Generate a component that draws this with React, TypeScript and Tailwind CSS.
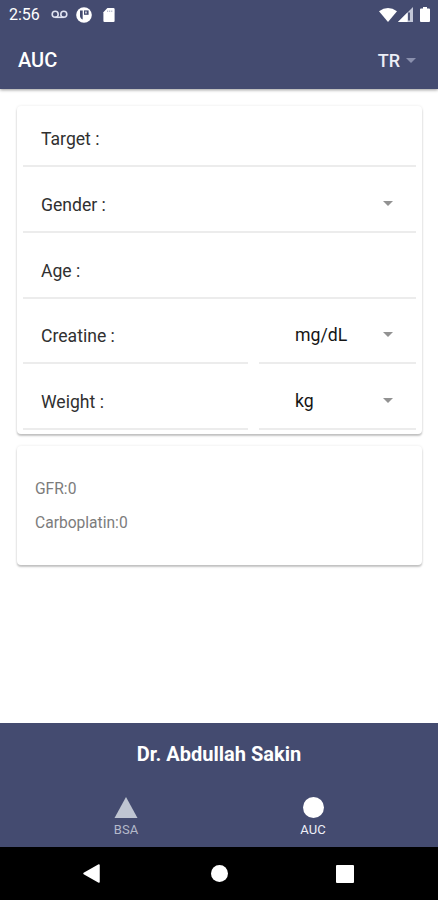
import React, { useState } from "react";

function Caret({ className }: { className: string }) {
  return (
    <svg className={className} width="10" height="5" viewBox="0 0 10 5">
      <path d="M0 0h10L5 5z" fill="currentColor" />
    </svg>
  );
}

function StatusBar() {
  return (
    <div className="flex h-[29px] items-center pl-[9px] pr-[8px] text-white">
      <span className="w-[42px] text-[16px] leading-none">2:56</span>
      <svg width="17" height="9" viewBox="0 0 17 9" fill="none" stroke="#dfe2f0" strokeWidth="1.6">
        <circle cx="4.2" cy="4.3" r="3" />
        <circle cx="12.8" cy="4.3" r="3" />
        <path d="M4.2 7.3h8.6" />
      </svg>
      <svg className="ml-[8px]" width="16" height="16" viewBox="0 0 16 16">
        <circle cx="8" cy="8" r="7.8" fill="#fff" />
        <path d="M4 3.4h2.7v9.2C5 11.8 4 10.5 4 9z" fill="#444b70" />
        <path d="M8 3.4h4.6v4.4H8z" fill="#444b70" />
        <path d="M9.3 4.6h1.3v1.9H9.3z" fill="#fff" />
      </svg>
      <svg className="ml-[11px]" width="12" height="14" viewBox="0 0 12 15">
        <path d="M4.3 0h6.5Q12 0 12 1.2v12.6Q12 15 10.8 15H1.2Q0 15 0 13.8V4.5z" fill="#fff" />
        <path d="M4.5 2.6v1.6M6.7 2.6v1.6M8.9 2.6v1.6" stroke="#b9bdce" strokeWidth="1.3" />
      </svg>
      <div className="ml-auto flex items-center">
        <svg width="18" height="14" viewBox="0 0 18 14">
          <path d="M0 3.3Q9-3.3 18 3.3L9 14z" fill="#fff" />
        </svg>
        <svg className="ml-px" width="15" height="15" viewBox="0 0 15 15">
          <path d="M15 0v15H0z" fill="#c3c7d8" />
          <path d="M9.5 5.5V15H0z" fill="#fff" />
          <path d="M11 5.500v8" stroke="#444b70" strokeWidth="1.8" />
        </svg>
        <svg className="ml-[7px]" width="10" height="15" viewBox="0 0 10 15">
          <path d="M3 0h4v1.5h2q1 0 1 1V14q0 1-1 1H1q-1 0-1-1V2.500q0-1 1-1h2z" fill="#fff" />
        </svg>
      </div>
    </div>
  );
}

interface RowProps {
  label: string;
  unit?: string;
  select?: boolean;
}

function Row({ label, unit, select }: RowProps) {
  return (
    <div className="flex h-[65.75px] shrink-0 gap-[11px]">
      <div className="flex flex-1 items-end justify-between border-b-2 border-[#ececec] pb-[16px] pl-[18px] pr-[23px]">
        <span className="text-[17.6px] leading-[20px] text-[#303030]">{label}</span>
        {select && <Caret className="mb-[9px] text-[#929292]" />}
      </div>
      {unit && (
        <div className="flex w-[157px] items-end justify-between border-b-2 border-[#ececec] pb-[16px] pl-[36px] pr-[23px]">
          <span className="text-[17.7px] leading-[21px] text-[#151515]">{unit}</span>
          <Caret className="mb-[9px] text-[#929292]" />
        </div>
      )}
    </div>
  );
}

const cardStyle =
  "ml-[17px] mr-[16px] rounded-[4px] bg-white shadow-[0_2px_2px_rgba(0,0,0,0.22),0_0_3px_rgba(0,0,0,0.09)]";

function App() {
  const [tab, setTab] = useState<string>("AUC");

  return (
    <div className="flex h-[900px] w-[438px] flex-col bg-white font-['Roboto',sans-serif]">
      <div className="h-[89px] bg-[#444b70] shadow-[0_1px_3px_rgba(0,0,0,0.4)]">
        <StatusBar />
        <div className="flex h-[62px] items-center justify-between pl-[18px] pr-[22px] text-white">
          <h1 className="text-[20px] font-medium">AUC</h1>
          <div className="flex items-center">
            <span className="text-[18px] font-medium text-[#eceef6]">TR</span>
            <Caret className="ml-[6px] text-[#8a90ad]" />
          </div>
        </div>
      </div>

      <div className="flex-1">
        <div className={`${cardStyle} mt-[17px] flex h-[328px] flex-col justify-end px-[6px] pb-[4px]`}>
          <Row label="Target :" />
          <Row label="Gender :" select />
          <Row label="Age :" />
          <Row label="Creatine :" unit="mg/dL" />
          <Row label="Weight :" unit="kg" />
        </div>
        <div className={`${cardStyle} mt-[12px] h-[119px] pl-[18px] pt-[33px] text-[15.6px] text-[#7c7c7c]`}>
          <p className="h-[34px] leading-[20px]">GFR:0</p>
          <p className="leading-[20px]">Carboplatin:0</p>
        </div>
      </div>

      <div className="h-[124px] bg-[#444b70]">
        <h2 className="pt-[19px] text-center text-[20px] font-bold leading-[25px] text-white">
          Dr. Abdullah Sakin
        </h2>
        <div className="mt-[30px] flex justify-center pl-px">
          <button
            className="flex w-[187px] flex-col items-center text-[#b4b9ca]"
            onClick={() => setTab("BSA")}
          >
            <svg width="24" height="21" viewBox="0 0 24 21">
              <path d="M12 0l11.5 21H.5z" fill={tab === "BSA" ? "#fff" : "#bfc5d2"} />
            </svg>
            <span className="mt-[4px] text-[13px] leading-[16px]">BSA</span>
          </button>
          <button
            className="flex w-[187px] flex-col items-center text-[#eef0f8]"
            onClick={() => setTab("AUC")}
          >
            <svg width="21" height="21" viewBox="0 0 21 21">
              <circle cx="10.5" cy="10.5" r="10.5" fill={tab === "AUC" ? "#fff" : "#bfc5d2"} />
            </svg>
            <span className="mt-[4px] text-[13px] leading-[16px]">AUC</span>
          </button>
        </div>
      </div>

      <div className="flex h-[53px] items-center bg-black pl-[83px]">
        <svg width="17" height="19" viewBox="0 0 17 19">
          <path d="M16 1v17L1 9.5z" fill="#fff" stroke="#fff" strokeWidth="1.5" strokeLinejoin="round" />
        </svg>
        <div className="ml-[111px] h-[17px] w-[17px] rounded-full bg-white" />
        <div className="ml-[108px] h-[18px] w-[18px] rounded-[1px] bg-white" />
      </div>
    </div>
  );
}

export default App;
